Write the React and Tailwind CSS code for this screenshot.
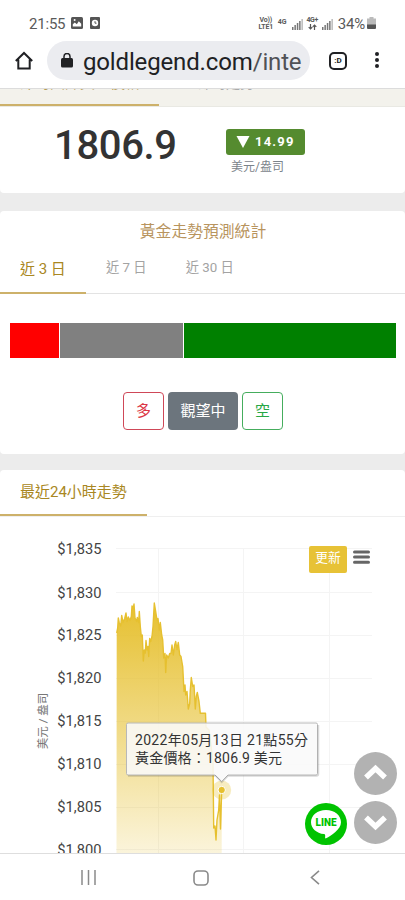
const TICKS = [
  { label: '$1,835', y: 548.5 },
  { label: '$1,830', y: 592.5 },
  { label: '$1,825', y: 635 },
  { label: '$1,820', y: 678 },
  { label: '$1,815', y: 721 },
  { label: '$1,810', y: 764 },
  { label: '$1,805', y: 807 },
  { label: '$1,800', y: 849.5 },
];

const PRICE_POINTS =
  '116.7,633 117.7,628 118.3,618 119.3,623 120.7,626 121.7,615.5 123,622.5 124.7,618.5 126,613 127,621.5 128.3,617 130,620.5 131.3,616.5 132,606 133.3,608 134,604 135,618 136.7,621.5 137.3,617.5 138.7,622.5 139.3,611.5 140.3,626.5 141.3,636.5 142.3,635 143.3,661 144.3,650 145.3,653 146,640.5 147,650 148,646.5 148.7,656.5 149.7,638.5 150.7,641.5 152,636.5 153,626.5 154.3,603 155.7,611.5 157,620 158,618.5 159.3,630 160.3,622.5 161.7,635 162.7,640 163.7,658 165,653.5 165.7,672.5 166.7,655 168.3,658 169.7,653.5 171,653.5 172,645 173.3,655 174.7,645 175.7,641.5 177,649.5 178.3,642.5 179.7,655 181,656.5 182.7,666.5 184,691.5 185,685 185.7,695 187,691.5 188.3,709 189.7,703.5 190.3,690 191.3,677.5 192.7,686.5 194,685 195.3,709 196.3,696.5 197.3,692.5 199,701.5 200.3,713.3 205.5,713.3 206,727 209,730 211,745 213,762 213.7,828 215,826 216,840 217,820 218.7,810 219.5,795 220.5,829 221.7,790';

function StatusBar() {
  return (
    <div className="flex h-[34px] items-end pl-[29px] pr-[30px] pb-px text-[#5a5a5a]">
      <span className="text-[15px] leading-[18px] tracking-[-0.2px]">21:55</span>
      <svg className="ml-[6px] mb-[4px]" width="12" height="12" viewBox="0 0 12 12">
        <rect width="12" height="12" rx="1.5" fill="#555" />
        <path d="M1.8 9.5V7.2l2-1.8 2 1.8 2-3 2.4 2.6v2.7z" fill="#fff" />
        <circle cx="3.6" cy="3" r="1" fill="#fff" />
      </svg>
      <svg className="ml-[7px] mb-[4px]" width="10" height="12" viewBox="0 0 10 12">
        <rect width="10" height="12" rx="1" fill="#555" />
        <circle cx="5" cy="6" r="3.2" fill="#fff" />
        <path d="M5 4.2V6.2h1.5" fill="none" stroke="#555" />
      </svg>
      <div className="ml-auto flex items-end">
        <div className="mb-[2px] w-[16px] text-center text-[7px] font-bold leading-[7px] tracking-[-0.2px]">
          Vo))<br />LTE1
        </div>
        <span className="ml-[4px] mb-[7px] w-[11px] text-[7px] font-bold leading-[8px]">4G</span>
        <Signal />
        <div className="ml-[3px] mb-[3px] w-[13px] text-center text-[7px] font-bold leading-[6px] tracking-[-0.3px]">
          4G+
          <svg className="mx-auto mt-px" width="9" height="6" viewBox="0 0 9 6" fill="none" stroke="#555" strokeWidth="1.2">
            <path d="M2.5 0v5M.7 3.2l1.8 1.8 1.8-1.8M6.5 6V1M4.7 2.8 6.5 1l1.8 1.8" />
          </svg>
        </div>
        <Signal />
        <span className="ml-[5px] -mr-px text-[15px] leading-[18px] tracking-[-0.2px]">34%</span>
        <svg className="ml-[3px] mb-[4px] -mr-px" width="9" height="12" viewBox="0 0 9 12">
          <path d="M2.5 0h4v1.5H9V8H0V1.5h2.5z" fill="#bbb" />
          <path d="M0 7.5h9V11q0 1-1 1H1q-1 0-1-1z" fill="#555" />
        </svg>
      </div>
    </div>
  );
}

function Signal() {
  return (
    <svg className="ml-[3px] mb-[3px] shrink-0" width="11" height="11" viewBox="0 0 11 11" fill="#777">
      <rect x="0" y="8" width="1.5" height="3" />
      <rect x="2.4" y="6" width="1.5" height="5" />
      <rect x="4.8" y="4" width="1.5" height="7" />
      <rect x="7.1" y="2" width="1.5" height="9" />
      <rect x="9.4" y="0" width="1.5" height="11" fill="#bbb" />
    </svg>
  );
}

function AddressBar() {
  return (
    <div className="flex h-[55px] items-start border-b border-[#dcdcdc] pt-[7px] pl-[15px]">
      <svg className="mt-[10px] shrink-0" width="18" height="19" viewBox="0 0 18 19" fill="none" stroke="#202124" strokeWidth="2">
        <path d="M.8 10 9 2l8.2 8M3.3 8.5v9h11.4v-9" />
      </svg>
      <div className="ml-[14px] flex h-[39px] w-[263px] shrink-0 items-center rounded-full bg-[#ebecf0] pl-[14px]">
        <svg className="shrink-0" width="12" height="15" viewBox="0 0 12 15">
          <rect y="5" width="12" height="9.5" rx="1.5" fill="#202124" />
          <path d="M3 6V3.5a3 3 0 0 1 6 0V6" fill="none" stroke="#202124" strokeWidth="1.5" />
        </svg>
        <span className="ml-[10px] mt-[2px] whitespace-nowrap text-[24px] leading-[30px] tracking-[-0.15px] text-[#202124]">
          goldlegend.com<span className="text-[#505156]">/inte</span>
        </span>
      </div>
      <div className="ml-[19px] mt-[11px] flex h-[18px] w-[18px] shrink-0 items-center justify-center rounded-[5px] border-2 border-[#202124] text-[8px] font-bold leading-none text-[#202124]">
        :D
      </div>
      <div className="ml-[28px] mt-[11px] flex flex-col gap-[2px]">
        <i className="h-1 w-1 rounded-full bg-[#202124]" />
        <i className="h-1 w-1 rounded-full bg-[#202124]" />
        <i className="h-1 w-1 rounded-full bg-[#202124]" />
      </div>
    </div>
  );
}

function PriceCard() {
  return (
    <>
      <div className="flex h-[18px] items-start overflow-hidden border-b border-[#e9e9e3] bg-[#f3f2ec] text-[15px] leading-[18px]">
        <div className="h-[17px] w-[159px] border-b-2 border-[#cdb16a] pl-5 text-[#b79d55]">
          <span className="-mt-[15px] block whitespace-nowrap">即時國際黃金價格</span>
        </div>
        <span className="-mt-[15px] ml-[39px] block text-[14px] text-[#aaa]">即時走勢</span>
      </div>
      <div className="flex h-[86px] rounded-b bg-white pl-[54px]">
        <span className="mt-[15px] w-[172px] text-[40px] font-medium leading-[48px] tracking-[-0.35px] text-[#333]">1806.9</span>
        <div>
          <div className="mt-[22px] flex h-[26px] w-[79px] items-center rounded-[3px] bg-[#558b2f] pl-[10px] text-[13px] font-bold tracking-[1.2px] text-white">
            <svg className="mr-[5px]" width="14" height="12" viewBox="0 0 14 12">
              <path d="M.5 0h13L7 12z" fill="#fff" />
            </svg>
            14.99
          </div>
          <div className="mt-[3px] pl-[5px] text-[12px] leading-[18px] text-[#7b838a]">美元/盎司</div>
        </div>
      </div>
    </>
  );
}

function ForecastCard() {
  return (
    <section className="mt-[18px] h-[243px] rounded bg-white">
      <h2 className="h-[40px] pt-[10px] pl-px text-center text-[15.8px] leading-[22px] text-[#b8945e]">黃金走勢預測統計</h2>
      <div className="flex h-[43px] border-b border-[#e3e3e3] text-[13.3px] leading-[18px] text-[#a3a3a3]">
        <div className="h-[43px] w-[86px] border-b-2 border-[#cdb16a] pl-5 pt-[9px] text-[15px] text-[#a98722]">近 3 日</div>
        <span className="ml-5 mt-[8px]">近 7 日</span>
        <span className="ml-[39px] mt-[8px]">近 30 日</span>
      </div>
      <div className="ml-[10px] mt-[29px] flex h-[35px] w-[386px] gap-px">
        <div className="w-[49px] bg-[#ff0000]" />
        <div className="w-[123px] bg-[#808080]" />
        <div className="flex-1 bg-[#008000]" />
      </div>
      <div className="mt-[34px] flex justify-center gap-[4px] pl-px text-[15px]">
        <button className="h-[38px] w-[41px] rounded border border-[#cf4858] text-[#dc3545]">多</button>
        <button className="h-[38px] w-[70px] rounded bg-[#6c757d] text-white">觀望中</button>
        <button className="h-[38px] w-[41px] rounded border border-[#45ad5d] text-[#28a745]">空</button>
      </div>
    </section>
  );
}

function TrendChart() {
  return (
    <svg className="block" width="405" height="336" viewBox="0 517 405 336">
      <defs>
        <linearGradient id="gold" gradientUnits="userSpaceOnUse" x1="0" y1="603" x2="0" y2="860">
          <stop offset="0" stopColor="#e6c02f" />
          <stop offset="1" stopColor="#e6c02f" stopOpacity="0.15" />
        </linearGradient>
      </defs>
      <g stroke="#f4f4f4" strokeWidth="1">
        {TICKS.map((t) => (
          <line key={t.label} x1="116" x2="372" y1={Math.floor(t.y) + 0.5} y2={Math.floor(t.y) + 0.5} />
        ))}
        <path d="M158.5 548V853M243.5 548V853M329.5 548V853" />
      </g>
      <g fill="#444" fontSize="14.7" textAnchor="end">
        {TICKS.map((t) => (
          <text key={t.label} x="101.5" y={t.y + 5}>{t.label}</text>
        ))}
      </g>
      <text transform="translate(47 721) rotate(-90)" textAnchor="middle" fontSize="11.5" fill="#777">美元 / 盎司</text>
      <polygon points={`116.5,860 ${PRICE_POINTS} 221.7,860`} fill="url(#gold)" />
      <polyline points={PRICE_POINTS} fill="none" stroke="#e6c02f" strokeWidth="1.4" strokeLinejoin="round" />
      <circle cx="221.7" cy="790" r="9.5" fill="#e6c02f" fillOpacity="0.3" />
      <circle cx="221.7" cy="790" r="3.7" fill="#e6c02f" stroke="#fff" strokeWidth="1" />
      <path
        d="M128 723H316q1.5 0 1.5 1.5V773.5q0 1.5-1.5 1.5H228L221.7 781.5 215 775H128q-1.5 0-1.5-1.5V724.5q0-1.5 1.5-1.5z"
        fill="#f9f9f9"
        fillOpacity="0.88"
        stroke="#b8b8b8"
      />
      <path d="M128 776H215.5L221.7 782.5 228 776H316.5q2 0 2-2V725" fill="none" stroke="#000" strokeOpacity="0.15" strokeWidth="1.5" />
      <g fill="#333" fontSize="14">
        <text x="135" y="745" textLength="173">2022年05月13日 21點55分</text>
        <text x="135" y="763" textLength="147">黃金價格：1806.9 美元</text>
      </g>
    </svg>
  );
}

function FloatingButtons() {
  return (
    <div className="absolute bottom-[8px] right-[8px] flex items-end gap-[7px]">
      <svg width="42" height="42" viewBox="0 0 42 42">
        <circle cx="21" cy="21" r="21" fill="#00c300" />
        <path d="M21 7C12.5 7 6 12.3 6 19.2c0 6.2 5.5 11 13 11.9 1.3.2 1.4.9 1.1 3.7 0 .7.4.8 1 .5C26 32.7 36 26.5 36 19.2 36 12.3 29.5 7 21 7z" fill="#fff" />
        <text x="21" y="23" textAnchor="middle" fontSize="10.5" fontWeight="900" fill="#00c300" textLength="21" lengthAdjust="spacingAndGlyphs">LINE</text>
      </svg>
      <div className="mb-px flex flex-col gap-[6px]">
        <svg width="43" height="43" viewBox="0 0 43 43">
          <circle cx="21.5" cy="21.5" r="21.5" fill="#b2b2b2" />
          <path d="m12 25.5 9.500-9 9.500 9" fill="none" stroke="#fff" strokeWidth="5.5" />
        </svg>
        <svg width="43" height="43" viewBox="0 0 43 43">
          <circle cx="21.5" cy="21.5" r="21.5" fill="#b2b2b2" />
          <path d="m12 16.5 9.5 9 9.5-9" fill="none" stroke="#fff" strokeWidth="5.5" />
        </svg>
      </div>
    </div>
  );
}

function TrendCard() {
  return (
    <section className="relative mt-[16px] h-[383px] rounded-t bg-white">
      <div className="h-[47px] border-b border-[#efefef]">
        <div className="h-[46px] w-[147px] border-b-2 border-[#cdb16a] pl-5 pt-[13px] text-[15px] leading-[18px] text-[#a98722]">
          最近24小時走勢
        </div>
      </div>
      <TrendChart />
      <div className="absolute right-[35px] top-[76px] flex">
        <button className="h-[27px] w-[38px] rounded-[2px] bg-[#e7c236] pb-[3px] text-[12.7px] text-white">更新</button>
        <svg className="ml-[6px] mt-[4px]" width="17" height="14" viewBox="0 0 17 14" stroke="#666" strokeWidth="3" strokeLinecap="round">
          <path d="M1.5 2h14M1.5 7h14M1.5 12.2h14" />
        </svg>
      </div>
      <FloatingButtons />
    </section>
  );
}

function NavBar() {
  return (
    <div className="flex h-[47px] items-start border-t border-[#dedede] bg-white pl-[81px] pt-[16px]">
      <svg width="15" height="15" viewBox="0 0 15 15" stroke="#8a8a8a" strokeWidth="1.5">
        <path d="M1 0v15M7.5 0v15M14 0v15" />
      </svg>
      <svg className="ml-[97px]" width="16" height="16" viewBox="0 0 16 16">
        <rect x="1" y="1" width="14" height="14" rx="4" fill="none" stroke="#8a8a8a" strokeWidth="1.6" />
      </svg>
      <svg className="ml-[101px]" width="10" height="15" viewBox="0 0 10 15" fill="none" stroke="#8a8a8a" strokeWidth="1.6">
        <path d="M9 .8 1.5 7.5 9 14.2" />
      </svg>
    </div>
  );
}

export default function App() {
  return (
    <div className="h-[900px] w-[405px] overflow-hidden bg-[#ececec] font-[Roboto,'Noto_Sans_CJK_TC',sans-serif]">
      <div className="bg-white">
        <StatusBar />
        <AddressBar />
      </div>
      <PriceCard />
      <ForecastCard />
      <TrendCard />
      <NavBar />
    </div>
  );
}
